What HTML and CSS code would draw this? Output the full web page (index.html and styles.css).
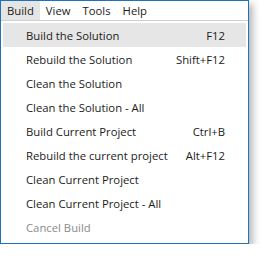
FILE: index.html
```html
<!DOCTYPE html>
<html>
<head>
<meta charset="utf-8">
<link rel="stylesheet" href="styles.css">
</head>
<body>
<div class="window">
  <div class="menubar">
    <span class="top active">Build</span>
    <span class="top">View</span>
    <span class="top">Tools</span>
    <span class="top">Help</span>
  </div>
  <ul class="menu">
    <li class="item hover"><span>Build the Solution</span><span class="key">F12</span></li>
    <li class="item"><span>Rebuild the Solution</span><span class="key">Shift+F12</span></li>
    <li class="item"><span>Clean the Solution</span></li>
    <li class="item"><span>Clean the Solution - All</span></li>
    <li class="item"><span>Build Current Project</span><span class="key">Ctrl+B</span></li>
    <li class="item"><span>Rebuild the current project</span><span class="key">Alt+F12</span></li>
    <li class="item"><span>Clean Current Project</span></li>
    <li class="item"><span>Clean Current Project - All</span></li>
    <li class="item disabled"><span>Cancel Build</span></li>
  </ul>
</div>
</body>
</html>
```
FILE: styles.css
```css
html, body {
  margin: 0;
  padding: 0;
  background: #ffffff;
}
body {
  font-family: "Open Sans", "Noto Sans", sans-serif;
  font-size: 11.3px;
  color: #1b1b1b;
}
.window {
  width: 247px;
  height: 242px;
  border: 1px solid #1c73ba;
  background: #ffffff;
  box-shadow: 4px 4px 7px rgba(0, 0, 0, 0.28);
  display: flex;
  flex-direction: column;
}
.menubar {
  height: 19px;
  display: flex;
  align-items: stretch;
  border-bottom: 1px solid #cfcfcf;
}
.top {
  padding: 0 6px;
  display: flex;
  align-items: center;
  line-height: 1;
}
.top.active {
  background: #e5e5e5;
}
.menu {
  list-style: none;
  margin: 0;
  padding: 2px 2px 0 2px;
}
.item {
  height: 24px;
  display: flex;
  align-items: center;
  justify-content: space-between;
  padding: 0 21px 0 23px;
}
.item.hover {
  background: #e6e6e6;
}
.item.disabled {
  color: #8a8a8a;
}
```
